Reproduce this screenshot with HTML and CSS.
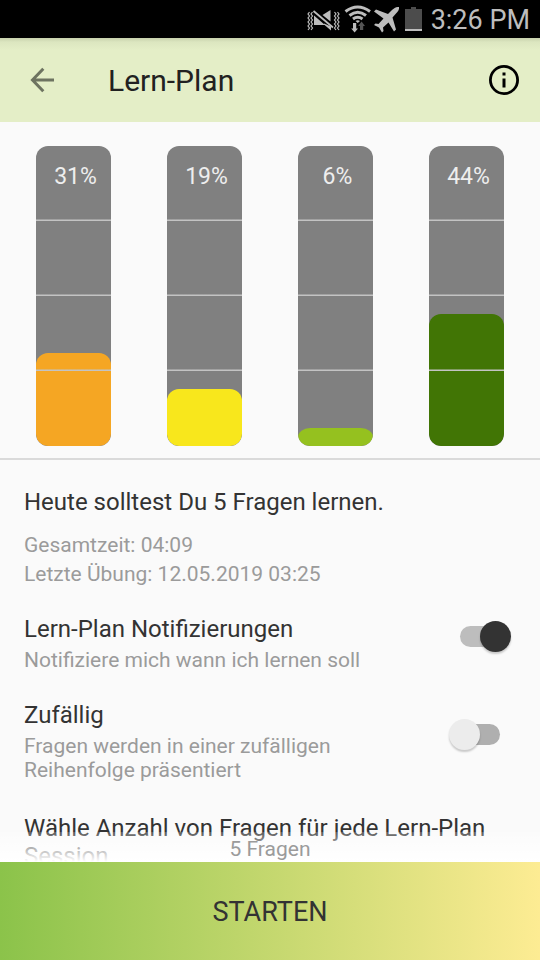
FILE: index.html
```html
<!DOCTYPE html>
<html lang="de">
<head>
<meta charset="utf-8">
<meta name="viewport" content="width=device-width, initial-scale=1">
<title>Lern-Plan</title>
<link rel="stylesheet" href="styles.css">
</head>
<body>
<div class="app">
  <div class="status">
    <svg class="status-icons" viewBox="0 0 118 38" width="118" height="38" aria-hidden="true">
      <g fill="none" stroke="#bdbdbd" stroke-width="1.2">
        <path d="M2.500 12l-1.500 2 1.500 2-1.500 2 1.500 2-1.500 2 1.500 2-1.500 2 1.500 2-1.500 2M5.500 12l-1.500 2 1.500 2-1.500 2 1.500 2-1.500 2 1.500 2-1.500 2 1.500 2-1.500 2"/>
        <path d="M27.500 12l1.500 2-1.500 2 1.500 2-1.500 2 1.500 2-1.500 2 1.500 2-1.500 2 1.500 2M30.500 12l1.500 2-1.500 2 1.500 2-1.500 2 1.500 2-1.500 2 1.500 2-1.500 2 1.500 2"/>
      </g>
      <path fill="none" stroke="#bdbdbd" stroke-width="1.8" d="M6.500 11L26 27.500"/>
      <path fill="#bdbdbd" d="M7 15.500L18 25H7zM15.500 15l8-5v11.500zM17 24.500v-1l7 3v4z"/>
      <g fill="none" stroke="#bdbdbd" stroke-width="3">
        <path d="M38.500 11.500Q50.700 2.500 63 11.500"/>
        <path d="M42.500 15.500Q50.700 9 59 15.500"/>
        <path d="M46 19Q50.700 15.500 55.500 19"/>
      </g>
      <path fill="#bdbdbd" d="M48.500 21q2.200-1.600 4.500 0l-2.200 2z M46 23h3.200v5.500h1.800l-3.400 4-3.400-4H46z"/>
      <path fill="#555" d="M53 30h3.200v-4h1.800l-3.400-4.500-3.400 4.500H53z"/>
      <path fill="#bdbdbd" d="M92 7c-3-.5-5 1-7 3l-4 4-12-4.500-2 2 9.500 7-5 5.500-3-.5-1.500 1.500 5 2.500 3 5 1.500-1.500-.5-3.500 5.500-5L87 31.500l2-2-3.500-12 3.500-4c2-2 3.500-4 3-6.500z"/>
      <path fill="#4c4c4c" d="M98 9h6V7h5v2h6v22H98z"/>
      <path fill="#bdbdbd" d="M98 29h17v2H98z"/>
    </svg>
    <time class="clock">3:26 PM</time>
  </div>
  <header class="bar">
    <button class="icon-button" type="button" aria-label="Zurück">
      <svg viewBox="0 0 36 36" width="36" height="36"><path d="M30 18H9M19.300 6.700L8.500 18l10.800 11.300" fill="none" stroke="#6d7360" stroke-width="3"/></svg>
    </button>
    <h1 class="title">Lern-Plan</h1>
    <button class="icon-button" type="button" aria-label="Info">
      <svg viewBox="0 0 36 36" width="36" height="36"><circle cx="18" cy="18" r="13.600" fill="none" stroke="#000" stroke-width="2.800"/><path d="M16.500 10.500h3v3h-3zM16.500 16.500h3v9h-3z"/></svg>
    </button>
  </header>
  <section class="chart" aria-label="Lernfortschritt">
    <div class="column"><div class="fill orange"></div><span class="percent">31%</span></div>
    <div class="column"><div class="fill yellow"></div><span class="percent">19%</span></div>
    <div class="column"><div class="fill lime"></div><span class="percent">6%</span></div>
    <div class="column"><div class="fill green"></div><span class="percent">44%</span></div>
  </section>
  <main class="content">
    <section class="summary">
      <h2 class="heading">Heute solltest Du 5 Fragen lernen.</h2>
      <p class="stat">Gesamtzeit: 04:09</p>
      <p class="stat">Letzte Übung: 12.05.2019 03:25</p>
    </section>
    <div class="setting">
      <div class="setting-text">
        <label class="heading" for="notify">Lern-Plan Notifizierungen</label>
        <p class="hint">Notifiziere mich wann ich lernen soll</p>
      </div>
      <input class="switch" id="notify" type="checkbox" role="switch" checked>
    </div>
    <div class="setting">
      <div class="setting-text">
        <label class="heading" for="random">Zufällig</label>
        <p class="hint">Fragen werden in einer zufälligen Reihenfolge präsentiert</p>
      </div>
      <input class="switch" id="random" type="checkbox" role="switch">
    </div>
    <p class="heading session">Wähle Anzahl von Fragen für jede Lern-Plan Session</p>
  </main>
  <footer class="footer">
    <p class="count">5 Fragen</p>
    <button class="start" type="button">STARTEN</button>
  </footer>
</div>
</body>
</html>
```
FILE: styles.css
```css
* { box-sizing: border-box; }
body {
  margin: 0;
  background: #fafafa;
  color: #333;
  font-family: Roboto, "Liberation Sans", sans-serif;
}
h1, h2, p { margin: 0; font-weight: 400; }
button { border: 0; padding: 0; background: none; font: inherit; color: inherit; }
svg { display: block; }

.app {
  display: flex;
  flex-direction: column;
  height: 100vh;
  overflow: hidden;
}
.status {
  flex: none;
  display: flex;
  justify-content: flex-end;
  align-items: center;
  gap: 6px;
  height: 38px;
  padding-right: 10px;
  background: #000;
  color: #bdbdbd;
}
.clock { padding-top: 2px; font-size: 27px; line-height: 36px; }
.bar {
  flex: none;
  display: flex;
  align-items: center;
  height: 84px;
  padding: 0 18px 0 24px;
  background: linear-gradient(#c7d1ac, #dce6c0 4px, #e4eec7 12px);
}
.icon-button { width: 36px; height: 36px; }
.title {
  flex: 1;
  padding: 2px 0 0 48px;
  font-size: 30px;
  line-height: 36px;
  color: #212121;
}
.chart {
  flex: none;
  display: flex;
  justify-content: space-between;
  padding: 24px 36px 12px;
  border-bottom: 2px solid #dadada;
}
.column {
  position: relative;
  display: flex;
  flex-direction: column;
  justify-content: flex-end;
  width: 75px;
  height: 300px;
  border-radius: 12px;
  background: #808080;
  overflow: hidden;
}
.column::after {
  content: "";
  position: absolute;
  inset: 0;
  background: linear-gradient(rgba(195, 195, 195, .5) 1px, #c3c3c3 1px 2px, transparent 2px) 0 73px / 100% 75px;
  clip-path: inset(70px 0 70px 0);
}
.percent {
  position: absolute;
  top: 16px;
  left: 0;
  width: 100%;
  padding-left: 4px;
  text-align: center;
  font-size: 23px;
  line-height: 30px;
  color: #eee;
}
.fill { border-radius: 12px; }
.orange { height: 31%; background: #f5a623; }
.yellow { height: 19%; background: #f8e71c; }
.lime { height: 6%; border-radius: 12px / 9px; background: #95c11f; }
.green { height: 44%; background: #417505; }

.content {
  flex: 1;
  min-height: 0;
  overflow: hidden;
  padding: 27px 24px 0;
}
.heading { display: block; font-size: 24px; line-height: 30px; }
.summary { padding-bottom: 11px; }
.summary .heading { padding-bottom: 14px; }
.stat { font-size: 21px; line-height: 29px; color: #9b9b9b; }
.setting {
  display: flex;
  justify-content: space-between;
  align-items: center;
  padding-bottom: 14px;
}
.setting-text { max-width: 344px; padding-top: 14px; }
.hint { padding-top: 4px; font-size: 21px; line-height: 24px; color: #9b9b9b; }
.switch {
  appearance: none;
  position: relative;
  flex: none;
  width: 40px;
  height: 21px;
  margin: 0 16px 0 0;
  border-radius: 11px;
  background: #afafaf;
}
.switch:checked { background: #bdbdbd; }
.switch::before {
  content: "";
  position: absolute;
  top: -5px;
  left: -11px;
  width: 31px;
  height: 31px;
  border-radius: 50%;
  background: #ececec;
  box-shadow: 0 2px 2px rgba(0, 0, 0, .2);
}
.switch:checked::before { left: 20px; background: #333; }
.session { line-height: 28px; padding-top: 18px; }

.footer { flex: none; position: relative; }
.count {
  position: absolute;
  bottom: 100%;
  left: 0;
  width: 100%;
  height: 30px;
  padding-top: 3px;
  text-align: center;
  font-size: 21px;
  line-height: 28px;
  color: #9b9b9b;
  background: linear-gradient(rgba(255, 255, 255, .2), #fff);
}
.start {
  display: block;
  width: 100%;
  height: 98px;
  padding-top: 2px;
  font-size: 27px;
  color: #333;
  background: linear-gradient(90deg, #8bc34a, #fdec93);
}
```
